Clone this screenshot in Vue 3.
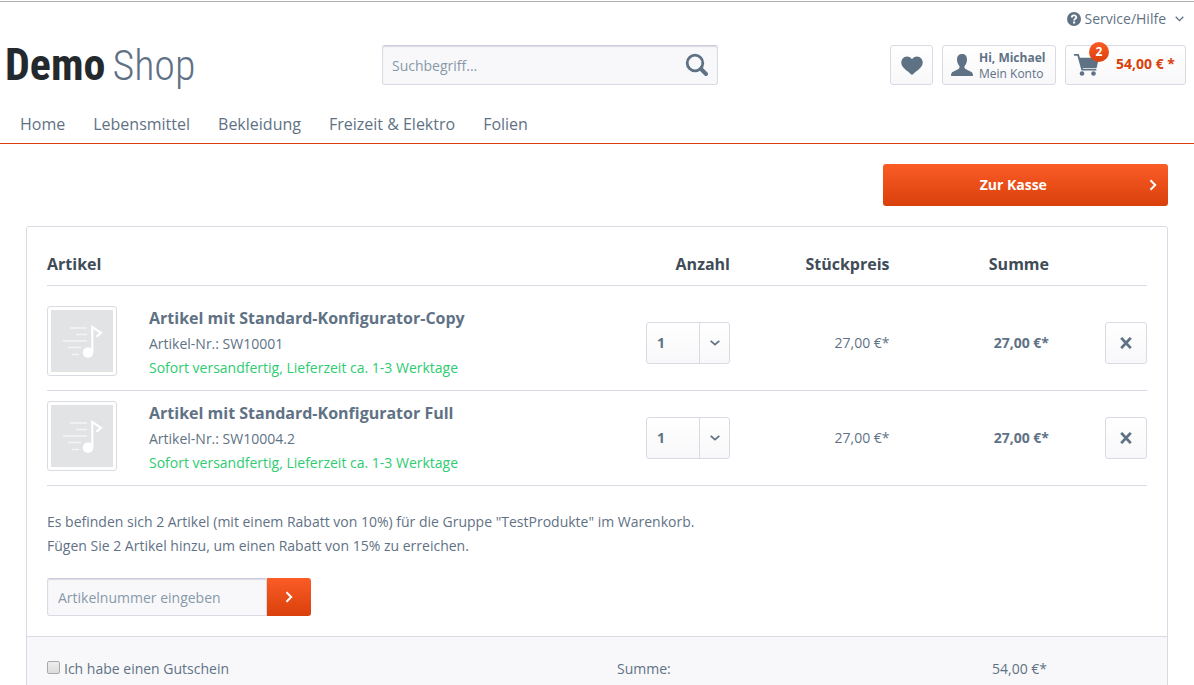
<script setup>
import { ref } from 'vue'

const nav = ['Home', 'Lebensmittel', 'Bekleidung', 'Freizeit & Elektro', 'Folien']
const items = ref([
  { id: 1, name: 'Artikel mit Standard-Konfigurator-Copy', number: 'SW10001', qty: 1, price: '27,00 €*', sum: '27,00 €*' },
  { id: 2, name: 'Artikel mit Standard-Konfigurator Full', number: 'SW10004.2', qty: 1, price: '27,00 €*', sum: '27,00 €*' },
])
const search = ref('')
const articleNumber = ref('')
const voucher = ref(false)
</script>

<template>
  <div class="page">
    <header class="header">
      <div class="topbar">
        <button type="button" class="service">
          <svg width="14" height="14" viewBox="0 0 14 14" aria-hidden="true">
            <circle cx="7" cy="7" r="7" fill="#5f7285" />
            <path d="M4.8 5.4C4.8 2.8 9.3 2.8 9.3 5.3 9.3 6.8 7.1 6.8 7.1 8.5" fill="none" stroke="#fff" stroke-width="1.8" />
            <rect x="6.1" y="9.5" width="2" height="2" fill="#fff" />
          </svg>
          <span>Service/Hilfe</span>
          <svg class="caret" width="9" height="6" viewBox="0 0 9 6" aria-hidden="true">
            <path d="M0.7 0.8 4.5 4.6 8.3 0.8" fill="none" stroke="#5f7285" stroke-width="1.3" />
          </svg>
        </button>
      </div>
      <div class="bar">
        <a href="#" class="logo"><strong>Demo</strong><span>Shop</span></a>
        <form class="search" role="search" @submit.prevent>
          <input v-model="search" type="search" aria-label="Suchbegriff" placeholder="Suchbegriff..." />
          <button type="submit" aria-label="Suchen">
            <svg width="24" height="24" viewBox="0 0 24 24" aria-hidden="true">
              <circle cx="10" cy="10" r="7.8" fill="none" stroke="#5f7285" stroke-width="2.8" />
              <path d="M16 16 21 21" stroke="#5f7285" stroke-width="4" stroke-linecap="round" />
            </svg>
          </button>
        </form>
        <div class="actions">
          <a href="#" class="btn wish" aria-label="Merkzettel">
            <svg width="22" height="19" viewBox="0 0 22 19" aria-hidden="true">
              <path d="M11 19C8 16.400 2.600 12.700 1 9.600C-0.600 6.300 0.600 2.400 3.600 1C6.400-0.200 9.400 0.800 11 3.200C12.600 0.800 15.600-0.200 18.400 1C21.400 2.400 22.600 6.300 21 9.600C19.400 12.700 14 16.400 11 19Z" fill="#5f7285" />
            </svg>
          </a>
          <a href="#" class="btn account">
            <svg width="22" height="22" viewBox="0 0 22 22" aria-hidden="true">
              <path d="M11 0C14.200 0 16 2 16 5.400C16 8.400 15 10.300 13.500 12.200C13.300 13.600 13.700 14.600 15 15.300L20 17.800C21.400 18.500 22 19.600 22 22H0C0 19.600 0.600 18.500 2 17.800L7 15.300C8.300 14.600 8.700 13.600 8.500 12.200C7 10.300 6 8.400 6 5.400C6 2 7.800 0 11 0Z" fill="#5f7285" />
            </svg>
            <span class="account-text"><strong>Hi, Michael</strong><span>Mein Konto</span></span>
          </a>
          <a href="#" class="btn cart">
            <svg width="25" height="22" viewBox="0 0 25 22" aria-hidden="true">
              <path d="M0 0H4.800L5.900 3.800H25L22.600 14H8.800L9 14.800H22.300V16.400H7.500L3.400 1.800H0Z" fill="#5f7285" />
              <circle cx="8" cy="19.500" r="2.300" fill="#5f7285" />
              <circle cx="19.500" cy="19.500" r="2.300" fill="#5f7285" />
            </svg>
            <span class="badge">2</span>
            <span class="amount">54,00 € *</span>
          </a>
        </div>
      </div>
      <nav class="nav">
        <a v-for="n in nav" :key="n" href="#">{{ n }}</a>
      </nav>
    </header>

    <main class="main">
      <div class="checkout-row">
        <button type="button" class="checkout">
          <span>Zur Kasse</span>
          <svg width="8" height="12" viewBox="0 0 8 12" aria-hidden="true">
            <path d="M1.500 1.200 6.200 6 1.500 10.800" fill="none" stroke="#fff" stroke-width="2" />
          </svg>
        </button>
      </div>

      <section class="panel">
        <div class="body">
          <table class="items">
            <thead>
              <tr>
                <th class="c-article">Artikel</th>
                <th class="c-qty">Anzahl</th>
                <th class="c-price">Stückpreis</th>
                <th class="c-sum">Summe</th>
                <th class="c-del"></th>
              </tr>
            </thead>
            <tbody>
              <tr v-for="item in items" :key="item.id">
                <td>
                  <div class="article">
                    <a href="#" class="thumb" :aria-label="item.name">
                      <svg width="62" height="62" viewBox="0 0 62 62" aria-hidden="true">
                        <rect width="62" height="62" fill="#e1e3e5" />
                        <path d="M19 18H36M25 24.500H36M12 31H36M17 37.500H30M21 44.500H28" fill="none" stroke="#f4f5f6" stroke-width="1.600" />
                        <circle cx="37" cy="42.500" r="5.300" fill="#fff" />
                        <path d="M41.300 42V17L50 22.800 45.500 26.800" fill="none" stroke="#fff" stroke-width="2.200" />
                      </svg>
                    </a>
                    <div class="info">
                      <a href="#" class="name">{{ item.name }}</a>
                      <p>Artikel-Nr.: {{ item.number }}</p>
                      <p class="stock">Sofort versandfertig, Lieferzeit ca. 1-3 Werktage</p>
                    </div>
                  </div>
                </td>
                <td class="right">
                  <span class="qty">
                    <select v-model="item.qty" :aria-label="'Anzahl ' + item.name">
                      <option v-for="n in 10" :key="n" :value="n">{{ n }}</option>
                    </select>
                    <span class="qty-arrow">
                      <svg width="10" height="6" viewBox="0 0 10 6" aria-hidden="true">
                        <path d="M0.700 0.800 5 4.600 9.300 0.800" fill="none" stroke="#5f7285" stroke-width="1.800" />
                      </svg>
                    </span>
                  </span>
                </td>
                <td class="right">{{ item.price }}</td>
                <td class="right sum">{{ item.sum }}</td>
                <td class="right">
                  <button type="button" class="btn delete" :aria-label="item.name + ' entfernen'">
                    <svg width="12" height="12" viewBox="0 0 12 12" aria-hidden="true">
                      <path d="M1.200 0.900 10.800 11.100M10.800 0.900 1.200 11.100" stroke="#5f7285" stroke-width="2.800" />
                    </svg>
                  </button>
                </td>
              </tr>
            </tbody>
          </table>
          <div class="note">
            <p>Es befinden sich 2 Artikel (mit einem Rabatt von 10%) für die Gruppe "TestProdukte" im Warenkorb.</p>
            <p>Fügen Sie 2 Artikel hinzu, um einen Rabatt von 15% zu erreichen.</p>
          </div>
          <form class="add" @submit.prevent>
            <input v-model="articleNumber" type="text" aria-label="Artikelnummer" placeholder="Artikelnummer eingeben" />
            <button type="submit" aria-label="Hinzufügen">
              <svg width="8" height="12" viewBox="0 0 8 12" aria-hidden="true">
                <path d="M1.500 1.200 6.200 6 1.500 10.800" fill="none" stroke="#fff" stroke-width="2" />
              </svg>
            </button>
          </form>
        </div>
        <footer class="totals">
          <label class="voucher"><input v-model="voucher" type="checkbox" /><span>Ich habe einen Gutschein</span></label>
          <div class="total"><span>Summe:</span><span>54,00 €*</span></div>
        </footer>
      </section>
    </main>
  </div>
</template>

<style>
body {
  background: #fff;
  overflow: hidden;
}
</style>

<style scoped>
* {
  box-sizing: border-box;
}
.page {
  font: 14px/24px "Open Sans", sans-serif;
  color: #5f7285;
  padding-top: 1px;
}
.page a {
  color: inherit;
  text-decoration: none;
}
p {
  margin: 0;
}
svg {
  display: block;
  flex: none;
}
button,
input,
select {
  font: inherit;
  color: inherit;
  margin: 0;
}
.header {
  border-top: 1px solid #aeaeae;
  border-bottom: 1px solid #d9400b;
}
.topbar {
  display: flex;
  justify-content: flex-end;
  padding: 5px 10px 0 0;
}
.service {
  display: flex;
  align-items: center;
  gap: 4px;
  border: 0;
  padding: 0;
  background: none;
}
.caret {
  margin-left: 5px;
}
.bar {
  display: grid;
  grid-template-columns: 382fr 336fr 476fr;
  height: 54px;
  padding-top: 14px;
}
.logo {
  display: flex;
  align-items: baseline;
  gap: 7px;
  height: 40px;
  padding-left: 5px;
  font: 44px/40px "Roboto Condensed", Roboto, sans-serif;
}
.logo strong {
  color: #24292d;
}
.logo span {
  font-size: 42px;
  font-weight: 300;
}
.search {
  display: flex;
  height: 40px;
  border: 1px solid #dadae5;
  border-top-color: #cbcbdb;
  border-radius: 3px;
  background: #f8f8fa;
  box-shadow: inset 0 1px 1px #dadae5;
}
.search input {
  flex: 1;
  min-width: 0;
  border: 0;
  padding: 2px 9px 0;
  background: none;
}
input::placeholder {
  color: #8798a9;
  opacity: 1;
}
.search button {
  border: 0;
  padding: 0 8px;
  background: none;
}
.actions {
  display: flex;
  justify-content: flex-end;
  gap: 9px;
  padding-right: 8px;
}
.btn {
  display: flex;
  align-items: center;
  height: 40px;
  border: 1px solid #dadae5;
  border-radius: 3px;
  background: linear-gradient(#fff, #f8f8fa);
}
.wish {
  justify-content: center;
  width: 43px;
}
.account {
  gap: 6px;
  width: 114px;
  padding: 0 8px;
}
.account-text {
  display: flex;
  flex-direction: column;
  padding-top: 2px;
  font-size: 12px;
  line-height: 16px;
}
.cart {
  position: relative;
  justify-content: space-between;
  width: 121px;
  padding: 0 10px 0 8px;
}
.badge {
  position: absolute;
  top: -4px;
  left: 23px;
  width: 20px;
  height: 20px;
  border-radius: 50%;
  background: linear-gradient(#fb5c26, #d9400b);
  color: #fff;
  font-size: 12px;
  font-weight: 700;
  line-height: 20px;
  text-align: center;
}
.amount {
  padding-bottom: 2px;
  color: #d9400b;
  font-weight: 700;
}
.nav {
  display: flex;
  gap: 28px;
  padding: 27px 20px 7px;
  font-size: 16px;
}
.main {
  padding: 20px 26px 0;
}
.checkout-row {
  display: flex;
  justify-content: flex-end;
}
.checkout {
  display: flex;
  align-items: center;
  gap: 16px;
  width: 25%;
  height: 42px;
  padding: 0 11px;
  border: 0;
  border-radius: 3px;
  background: linear-gradient(#fb5c26, #d9400b);
  color: #fff;
  font-weight: 700;
}
.checkout span {
  flex: 1;
}
.panel {
  margin-top: 20px;
  border: 1px solid #dadae5;
  border-radius: 3px;
}
.body {
  padding: 16px 20px 20px;
}
.items {
  width: 100%;
  border-collapse: separate;
  border-spacing: 0;
  table-layout: fixed;
}
.items th {
  height: 43px;
  padding: 0;
  border-bottom: 1px solid #dadae5;
  color: #3f4c58;
  font-size: 16px;
  font-weight: 700;
  text-align: right;
}
.items .c-article {
  text-align: left;
}
.c-qty {
  width: 11%;
}
.c-price,
.c-sum {
  width: 14.5%;
}
.c-del {
  width: 98px;
}
.items td {
  padding: 10px 0;
  border-bottom: 1px solid #dadae5;
}
.items tbody tr:first-child td {
  padding-top: 20px;
}
.items td.right {
  text-align: right;
}
.items td.sum {
  font-weight: 700;
}
.article {
  display: flex;
  gap: 32px;
}
.thumb {
  height: 70px;
  padding: 3px;
  border: 1px solid #dadae5;
  border-radius: 3px;
}
.name {
  display: block;
  margin-bottom: 2px;
  font-size: 16px;
  font-weight: 700;
}
.stock {
  color: #2ecc71;
}
.qty {
  display: inline-grid;
  width: 84px;
  height: 42px;
  border: 1px solid #dadae5;
  border-radius: 3px;
  background: linear-gradient(#fff, #f8f8fa);
  vertical-align: middle;
}
.qty select {
  grid-area: 1 / 1;
  appearance: none;
  width: 100%;
  border: 0;
  padding: 0 10px;
  background: none;
  font-weight: 700;
}
.qty-arrow {
  grid-area: 1 / 1;
  justify-self: end;
  display: flex;
  align-items: center;
  justify-content: center;
  width: 30px;
  border-left: 1px solid #dadae5;
  pointer-events: none;
}
.delete {
  justify-content: center;
  width: 42px;
  height: 42px;
  margin-left: auto;
  padding: 0;
}
.note {
  padding: 24px 0 20px;
}
.add {
  display: flex;
  width: 264px;
  height: 38px;
}
.add input {
  flex: 1;
  min-width: 0;
  border: 1px solid #dadae5;
  border-top-color: #cbcbdb;
  border-radius: 3px 0 0 3px;
  padding: 2px 10px 0;
  background: #f8f8fa;
  box-shadow: inset 0 1px 1px #dadae5;
}
.add button {
  display: flex;
  align-items: center;
  justify-content: center;
  width: 44px;
  border: 0;
  border-radius: 0 3px 3px 0;
  background: linear-gradient(#fb5c26, #d9400b);
}
.totals {
  display: grid;
  grid-template-columns: 570fr 530fr;
  padding: 20px 20px 24px;
  border-top: 1px solid #dadae5;
  background: #f8f8fa;
}
.voucher {
  display: flex;
  gap: 4px;
}
.voucher input {
  appearance: none;
  width: 13px;
  height: 13px;
  margin-top: 4px;
  border: 1px solid #a9a9a9;
  border-radius: 2px;
  background: linear-gradient(#eee, #dcdcdc);
}
.voucher input:checked {
  background: #5f7285;
}
.total {
  display: flex;
  justify-content: space-between;
  padding-right: 100px;
}
</style>
